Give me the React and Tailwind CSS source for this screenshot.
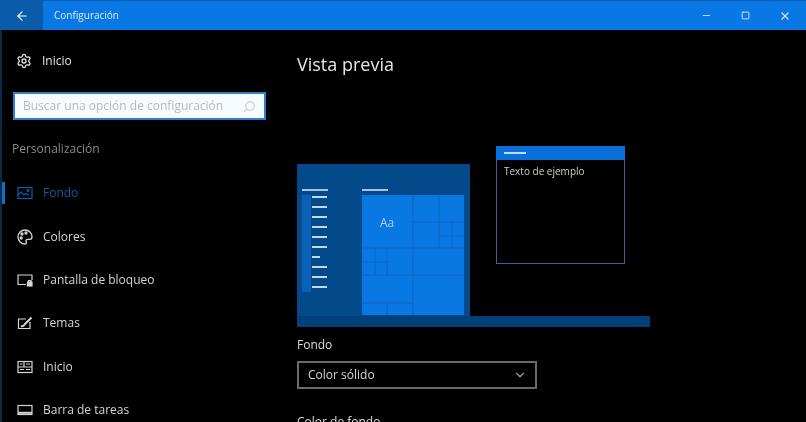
import { ArrowLeft, ChevronDown, Minus, Search, Settings, Square, X } from "lucide-react";

function ImageIcon() {
  return (
    <svg width="16" height="16" viewBox="0 0 16 16" fill="none" stroke="currentColor" strokeWidth="1.2">
      <rect x="1" y="2.500" width="14" height="11" />
      <path d="M1 10l3-3 3 3 2-1.500 3 2" />
      <circle cx="11" cy="5.500" r="1" />
    </svg>
  );
}

function PaletteIcon() {
  return (
    <svg width="16" height="16" viewBox="0 0 16 16" fill="none" stroke="currentColor" strokeWidth="1.3">
      <path d="M8 1a7 7 0 1 0 0 14c1.600 0 1.800-1.200 1.200-2.200-.7-1.200.1-2.400 1.400-2.400H13c1.300 0 2-1 2-2.400C15 3.800 11.900 1 8 1z" />
      <circle cx="5" cy="5" r="1" />
      <circle cx="9" cy="4" r="1" />
      <circle cx="4.200" cy="9" r="1" />
    </svg>
  );
}

function LockScreenIcon() {
  return (
    <svg width="16" height="16" viewBox="0 0 16 16" fill="none" stroke="currentColor" strokeWidth="1.2">
      <path d="M9 12.500H1V3h14v5" />
      <rect x="10.500" y="10" width="4.500" height="4" fill="currentColor" />
      <path d="M11.500 10V8.500h2.500V10" />
    </svg>
  );
}

function ThemeIcon() {
  return (
    <svg width="16" height="16" viewBox="0 0 16 16" fill="none" stroke="currentColor" strokeWidth="1.2">
      <path d="M13 7v6.500H1.500V4H9" />
      <path d="M4 11c1.500.5 3-.2 3.500-1.500L14.500 2.500" strokeWidth="2" />
    </svg>
  );
}

function StartIcon() {
  return (
    <svg width="16" height="16" viewBox="0 0 16 16" fill="none" stroke="currentColor" strokeWidth="1.2">
      <rect x="1" y="2.500" width="14" height="11" />
      <path d="M1 8h14M7 2.500V8M3 5h2.500M9 5h4M3 10.500h4M9 10.500h4" />
    </svg>
  );
}

function TaskbarIcon() {
  return (
    <svg width="16" height="16" viewBox="0 0 16 16" fill="none" stroke="currentColor" strokeWidth="1.2">
      <rect x="1" y="3.500" width="14" height="9" />
      <path d="M1 10.800h14" strokeWidth="2" />
    </svg>
  );
}

const navItems = [
  { label: "Fondo", icon: <ImageIcon />, active: true },
  { label: "Colores", icon: <PaletteIcon /> },
  { label: "Pantalla de bloqueo", icon: <LockScreenIcon /> },
  { label: "Temas", icon: <ThemeIcon /> },
  { label: "Inicio", icon: <StartIcon /> },
  { label: "Barra de tareas", icon: <TaskbarIcon /> },
];

const lineWidths = [15, 15, 15, 15, 15, 15, 8, 15, 15, 15];

function NavRow({ item }) {
  return (
    <div className={`relative flex h-[43.400px] items-center gap-[10px] pl-[15px] text-[12px] ${item.active ? "text-[#0f5cab]" : "text-[#d6d6d6]"}`}>
      {item.active && <div className="absolute left-0 top-[10px] h-[22px] w-[3px] bg-[#0e6fd0]" />}
      {item.icon}
      <span>{item.label}</span>
    </div>
  );
}

function Tiles() {
  return (
    <div className="relative h-[120px] w-[102px] bg-[#0a78e2]">
      <svg className="absolute inset-0" width="102" height="120" fill="none" stroke="#0866c2" strokeWidth="1">
        <path d="M51 0v120M77 0v53M51 27h51M0 53h102M90 27v26M77 41h25M13 53v27M25 53v27M0 67h25M0 80h102M0 108h51M25 108v12" />
      </svg>
      <span className="absolute left-[18px] top-[19px] text-[12px] text-[#a9d4fa]">Aa</span>
    </div>
  );
}

function DesktopPreview() {
  return (
    <div className="relative mt-[86px] h-[163px] w-[353px]">
      <div className="flex h-[152px] w-[173px] bg-[#034a8a] pt-[25px]">
        <div className="ml-[5px] w-[60px]">
          <div className="h-[2px] w-[26px] bg-[#a9c4de]" />
          <div className="mt-[4px] flex">
            <div className="h-[97px] w-[9px] bg-[#0a62b8]" />
            <div className="ml-[1px] flex flex-col gap-[8px] pt-[1px]">
              {lineWidths.map((w, i) => (
                <div key={i} className="h-[2px] bg-[#c4d8ec]" style={{ width: w }} />
              ))}
            </div>
          </div>
        </div>
        <div>
          <div className="h-[2px] w-[26px] bg-[#a9c4de]" />
          <div className="mt-[4px]">
            <Tiles />
          </div>
        </div>
      </div>
      <div className="h-[11px] w-[353px] bg-[#034079]" />
      <div className="absolute left-[199px] top-[-18px] h-[118px] w-[129px] border border-[#3f5f95] bg-black">
        <div className="-mx-px -mt-px flex h-[14px] items-center bg-[#0a6fd8] pl-[8px]">
          <div className="h-[2px] w-[22px] bg-[#b8e0ff]" />
        </div>
        <p className="pl-[7px] pt-[4px] text-[10px] leading-[14px] text-[#cfcfcf]">Texto de ejemplo</p>
      </div>
    </div>
  );
}

export default function App() {
  return (
    <div
      className="flex h-[422px] w-[806px] flex-col overflow-hidden bg-black blur-[0.7px]"
      style={{ fontFamily: '"Open Sans", "Noto Sans", sans-serif' }}
    >
      <header className="flex h-[30px] shrink-0 items-center border-t border-[#0a5cb0] bg-[#0a78e4] text-white">
        <div className="flex h-full w-[43px] items-center justify-center bg-[#0a5cab]">
          <ArrowLeft size={14} />
        </div>
        <span className="ml-[11px] text-[10px] text-[#d8ecff]">Configuración</span>
        <div className="ml-auto flex items-center gap-[29px] pr-[15px] text-[#cfe6fb]">
          <Minus size={11} />
          <Square size={9} strokeWidth={2.500} />
          <X size={12} strokeWidth={2.500} />
        </div>
      </header>

      <div className="flex min-h-0 flex-1">
        <aside className="w-[297px] shrink-0 border-l-2 border-[#0b2a4a]">
          <div className="flex h-[62px] items-center gap-[10px] pl-[14px] text-[12px] text-[#e2e2e2]">
            <Settings size={16} />
            <span>Inicio</span>
          </div>
          <div className="ml-[11px] flex h-[28px] w-[253px] items-center justify-between border-2 border-[#2f7fd0] bg-[#f6fbff] px-[8px] text-[12px] text-[#b8b8b8]">
            <span>Buscar una opción de configuración</span>
            <Search size={13} className="-scale-x-100 text-[#c8c8c8]" />
          </div>
          <p className="ml-[10px] mt-[21px] text-[12px] leading-[16px] text-[#8a8a8a]">Personalización</p>
          <div className="mt-[14.500px]">
            {navItems.map((item) => (
              <NavRow key={item.label} item={item} />
            ))}
          </div>
        </aside>

        <main className="flex-1 pt-[20px]">
          <h1 className="text-[18px] leading-[28px] text-[#e6e6e6]">Vista previa</h1>
          <DesktopPreview />
          <p className="mt-[9px] text-[12px] leading-[18px] text-[#dcdcdc]">Fondo</p>
          <div className="mt-[7px] flex h-[28px] w-[240px] items-center justify-between border-2 border-[#6a6a6a] pl-[9px] pr-[8px] text-[12px] text-[#d6d6d6]">
            <span>Color sólido</span>
            <ChevronDown size={14} className="text-[#a0a0a0]" />
          </div>
          <p className="mt-[24px] text-[12px] text-[#dcdcdc]">Color de fondo</p>
        </main>
      </div>
    </div>
  );
}
